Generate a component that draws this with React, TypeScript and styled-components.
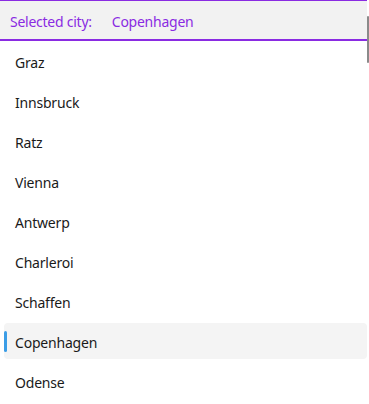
import React from "react";
import styled, { createGlobalStyle } from "styled-components";

const Global = createGlobalStyle`
  html, body { margin: 0; padding: 0; background: #ffffff; overflow: hidden; }
  body { font-family: "Segoe UI", "Noto Sans", "Open Sans", sans-serif; }
`;

const Page = styled.div`
  position: relative;
  width: 369px;
  height: 404px;
  overflow: hidden;
`;

const Content = styled.div`
  width: 367px;
  display: flex;
  flex-direction: column;
`;

const Header = styled.div`
  height: 38px;
  box-sizing: border-box;
  height: 41px;
  padding: 2px 0 0 10px;
  background: #f2f2f2;
  border-top: 1px solid #8a2be2;
  border-bottom: 2px solid #8a2be2;
  display: flex;
  align-items: center;
  gap: 20px;
  color: #8a2be2;
  font-size: 14px;
  letter-spacing: -0.25px;
`;

const List = styled.div`
  display: flex;
  flex-direction: column;
  padding: 0 0 0 4px;
`;

const Row = styled.div<{ $selected?: boolean }>`
  position: relative;
  box-sizing: border-box;
  height: 36px;
  margin: 2px 0;
  border-radius: 4px;
  display: flex;
  align-items: center;
  padding: 2px 0 0 11px;
  font-size: 14px;
  letter-spacing: -0.2px;
  color: #1a1a1a;
  background: ${(p) => (p.$selected ? "#f4f4f4" : "transparent")};
`;

const Indicator = styled.span`
  position: absolute;
  left: 0;
  top: 8px;
  width: 3px;
  height: 21px;
  border-radius: 2px;
  background: #3b9de6;
`;

const Thumb = styled.div`
  position: absolute;
  right: 0;
  top: 16px;
  width: 2px;
  height: 47px;
  background: #8a8a8a;
  border-radius: 1px;
`;

const cities = [
  "Graz",
  "Innsbruck",
  "Ratz",
  "Vienna",
  "Antwerp",
  "Charleroi",
  "Schaffen",
  "Copenhagen",
  "Odense",
];

export default function App() {
  const selected = "Copenhagen";
  return (
    <Page>
      <Global />
      <Content>
        <Header>
          <span>Selected city:</span>
          <span>{selected}</span>
        </Header>
        <List>
          {cities.map((c) => (
            <Row key={c} $selected={c === selected}>
              {c === selected && <Indicator />}
              {c}
            </Row>
          ))}
        </List>
      </Content>
      <Thumb />
    </Page>
  );
}
